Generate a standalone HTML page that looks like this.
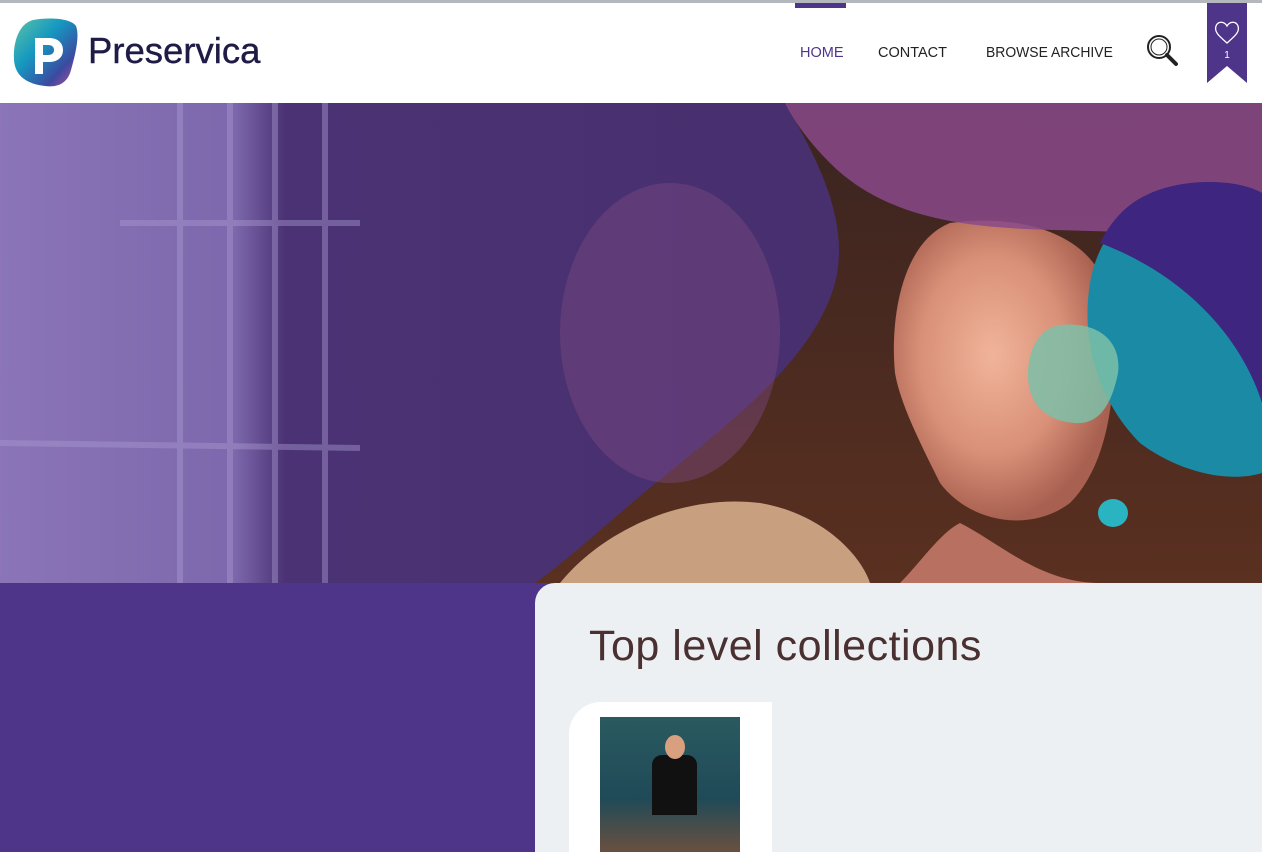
<!DOCTYPE html>
<html><head><style>
body{margin:0;width:1262px;height:852px;overflow:hidden;background:#fff;font-family:"Liberation Sans",sans-serif;position:relative}
.abs{position:absolute}
</style></head><body>
<div class="abs" style="left:0;top:0;width:1262px;height:3px;background:#b4b8bd"></div>
<svg class="abs" style="left:13px;top:18px" width="66" height="70" viewBox="0 0 66 70">
<defs><linearGradient id="lg" x1="0" y1="0" x2="1" y2="1"><stop offset="0" stop-color="#5cc3a6"/><stop offset=".4" stop-color="#1598c0"/><stop offset=".75" stop-color="#3b4aa0"/><stop offset="1" stop-color="#c0509a"/></linearGradient></defs>
<path d="M20 2C35 -1 58 0 63 8C67 18 62 38 58 52C55 64 46 70 32 68C14 66 2 58 1 42C0 26 5 6 20 2Z" fill="url(#lg)"/>
<path d="M22 20h14c9 0 14 5 14 12s-5 12-14 12h-6v12h-8z M30 27v10h5c4 0 6-2 6-5s-2-5-6-5z" fill="#fff" fill-rule="evenodd"/>
</svg>
<div class="abs" style="left:88px;top:30px;font-size:36.5px;color:#1e1c46;-webkit-text-stroke:0.4px #1e1c46">Preservica</div>
<div class="abs" style="left:795px;top:3px;width:51px;height:5px;background:#4e3589"></div>
<div class="abs" style="left:800px;top:45px;font-size:14.5px;color:#4e3589">HOME</div>
<div class="abs" style="left:878px;top:45px;font-size:14.5px;color:#222">CONTACT</div>
<div class="abs" style="left:986px;top:45px;font-size:14.5px;color:#222;transform:scaleX(0.96);transform-origin:left">BROWSE ARCHIVE</div>
<svg class="abs" style="left:1145px;top:33px" width="34" height="34" viewBox="0 0 34 34"><circle cx="14" cy="14" r="11" fill="none" stroke="#222" stroke-width="2"/><circle cx="14" cy="14" r="8" fill="none" stroke="#222" stroke-width="1"/><path d="M22 22l9 9" stroke="#222" stroke-width="4" stroke-linecap="round"/></svg>
<svg class="abs" style="left:1207px;top:3px" width="40" height="80" viewBox="0 0 40 80"><path d="M0 0h40v80L20 63L0 80z" fill="#4e3589"/><path d="M20 40C12 33 7 29 9 23C11 18 17 18 20 23C23 18 29 18 31 23C33 29 28 33 20 40Z" fill="none" stroke="#fff" stroke-width="1.3"/><text x="20" y="55" fill="#fff" font-size="10" text-anchor="middle" font-family="Liberation Sans">1</text></svg>
<svg class="abs" style="left:0;top:103px" width="1262" height="480" viewBox="0 0 1262 480">
<defs>
<radialGradient id="face" cx="0.45" cy="0.45" r="0.55"><stop offset="0" stop-color="#f0b49a"/><stop offset=".6" stop-color="#d99078"/><stop offset="1" stop-color="#a86050"/></radialGradient>
<linearGradient id="bgp" x1="0" x2="1"><stop offset="0" stop-color="#8b75b8"/><stop offset=".28" stop-color="#7e68ad"/><stop offset=".34" stop-color="#4a3274"/><stop offset="1" stop-color="#48306f"/></linearGradient>
<linearGradient id="hair" x1="0" y1="0" x2="0" y2="1"><stop offset="0" stop-color="#3a2420"/><stop offset="1" stop-color="#5a3020"/></linearGradient>
</defs>
<rect width="1262" height="480" fill="url(#hair)"/>
<path d="M560 480C600 430 680 390 760 400C820 410 860 450 870 480Z" fill="#c8a080"/>
<path d="M950 120C1020 110 1100 130 1110 200C1120 280 1110 360 1070 400C1030 430 970 420 940 380C920 340 900 300 895 270C890 220 900 140 950 120Z" fill="url(#face)"/>
<path d="M960 420C1000 440 1040 480 1100 480H900C920 460 940 430 960 420Z" fill="#b87060"/>
<path d="M0 0H785C820 60 850 120 835 180C810 270 700 340 620 410C580 445 550 470 535 480H0Z" fill="url(#bgp)"/>
<g stroke="#a898cf" stroke-width="6" opacity=".45"><line x1="180" y1="0" x2="180" y2="480"/><line x1="230" y1="0" x2="230" y2="480"/><line x1="275" y1="0" x2="275" y2="480"/><line x1="325" y1="0" x2="325" y2="480"/><line x1="120" y1="120" x2="360" y2="120"/><line x1="0" y1="340" x2="360" y2="345"/></g>
<ellipse cx="670" cy="230" rx="110" ry="150" fill="#7a4a80" opacity=".45"/>
<path d="M785 0H1262V135C1200 130 1150 130 1090 128C1010 125 900 130 830 60C810 40 795 20 785 0Z" fill="#8a4a8a" opacity=".85"/>
<path d="M1200 80C1240 80 1262 90 1262 90V370C1230 380 1180 370 1140 340C1100 300 1080 240 1090 180C1100 120 1150 80 1200 80Z" fill="#1b8aa4"/>
<path d="M1190 80C1240 75 1262 90 1262 90V300C1240 230 1180 170 1100 140C1120 100 1150 85 1190 80Z" fill="#3d2580"/>
<path d="M1060 222C1100 218 1122 240 1118 270C1112 300 1100 322 1075 320C1045 318 1028 300 1028 272C1028 245 1040 225 1060 222Z" fill="#7cc0a8" opacity=".85"/>
<ellipse cx="1113" cy="410" rx="15" ry="14" fill="#2ab3c0"/>
</svg>
<div class="abs" style="left:0;top:583px;width:1262px;height:269px;background:#4e3589"></div>
<div class="abs" style="left:535px;top:583px;width:727px;height:269px;background:#edf0f3;border-top-left-radius:20px"></div>
<div class="abs" style="left:589px;top:622px;font-size:43px;color:#4a3030;font-weight:300;letter-spacing:0.5px">Top level collections</div>
<div class="abs" style="left:569px;top:702px;width:203px;height:150px;background:#fff;border-top-left-radius:32px"></div>
<div class="abs" style="left:600px;top:717px;width:140px;height:135px;background:linear-gradient(#2a5a60,#1f4a58 60%,#6a5040)"></div>
<div class="abs" style="left:652px;top:755px;width:45px;height:60px;background:#111;border-radius:10px 10px 0 0"></div>
<div class="abs" style="left:665px;top:735px;width:20px;height:24px;background:#d9a080;border-radius:50%"></div>
</body></html>
